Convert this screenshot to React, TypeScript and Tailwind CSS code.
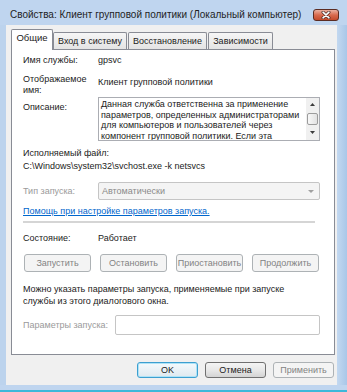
import React from "react";

function PanelButton({ label }: { label: string }) {
  return (
    <div className="w-[67px] h-[18px] shrink-0 border border-[#adb2b5] rounded-[3px] bg-[#f4f4f4] text-[#838383] flex items-center justify-center">
      {label}
    </div>
  );
}

export default function App() {
  return (
    <div className="w-[347px] h-[392px] overflow-hidden bg-[#bfd5ef] flex flex-col font-['Liberation_Sans',sans-serif] text-[9px] leading-[11px] text-[#1b1b1b]">
      {/* title bar */}
      <div className="h-[25px] shrink-0 flex items-start pl-[10px] pr-[8px]">
        <span className="mt-[9px] text-[10px] leading-[12px] text-[#1e1e1e] whitespace-nowrap">
          Свойства: Клиент групповой политики (Локальный компьютер)
        </span>
        <div className="ml-auto mt-[9px] w-[26px] h-[12px] rounded-[3px] border border-[#5b2c22] bg-linear-to-b from-[#eab0a0] via-[#d86a4e] to-[#c44a2a] flex items-center justify-center">
          <svg width="10" height="8" viewBox="0 0 10 8">
            <path d="M2 1.2 L8 6.8 M8 1.2 L2 6.8" stroke="#4a2a24" strokeWidth="3" strokeLinecap="round" />
            <path d="M2 1.2 L8 6.8 M8 1.2 L2 6.8" stroke="#ffffff" strokeWidth="1.6" strokeLinecap="round" />
          </svg>
        </div>
      </div>

      {/* middle */}
      <div className="flex h-[360px] shrink-0">
        <div className="w-[6px] shrink-0 bg-[#bcd3ed]" />
        <div className="w-[331px] shrink-0 bg-[#f0f0f0] pl-[5px] pr-[2px] pt-[4px] flex flex-col">
          {/* tabs */}
          <div className="h-[20px] flex items-end shrink-0">
            <div className="w-[42px] h-[21px] -mb-[1px] z-10 relative bg-white border border-b-0 border-[#898c95] rounded-t-[2px] flex items-start justify-center pt-[2px] leading-[12px] text-[9.5px]">
              Общие
            </div>
            <div className="w-[74px] h-[17px] bg-linear-to-b from-[#f6f6f6] to-[#e4e4e4] border border-b-0 border-[#898c95] rounded-t-[2px] flex items-center justify-center">
              Вход в систему
            </div>
            <div className="w-[79px] h-[17px] ml-[1px] bg-linear-to-b from-[#f6f6f6] to-[#e4e4e4] border border-b-0 border-[#898c95] rounded-t-[2px] flex items-center justify-center">
              Восстановление
            </div>
            <div className="w-[65px] h-[17px] ml-[1px] bg-linear-to-b from-[#f6f6f6] to-[#e4e4e4] border border-b-0 border-[#898c95] rounded-t-[2px] flex items-center justify-center">
              Зависимости
            </div>
          </div>

          {/* panel */}
          <div className="w-[324px] h-[306px] shrink-0 bg-white border border-[#898c95] pl-[11px] pt-[5px] flex flex-col">
            <div className="flex h-[11px]">
              <div className="w-[75px] shrink-0">Имя службы:</div>
              <div>gpsvc</div>
            </div>
            <div className="flex mt-[8px] h-[22px]">
              <div className="w-[75px] shrink-0">
                <div>Отображаемое</div>
                <div>имя:</div>
              </div>
              <div className="mt-[3px]">Клиент групповой политики</div>
            </div>
            <div className="flex mt-[1px]">
              <div className="w-[75px] shrink-0 mt-[5px]">Описание:</div>
              <div className="w-[222px] h-[44px] border border-[#abadb3] flex">
                <div className="flex-1 pl-[2px] pt-[1px] leading-[10.5px] overflow-hidden">
                  Данная служба ответственна за применение параметров, определенных администраторами для компьютеров и пользователей через компонент групповой политики. Если эта
                </div>
                <div className="w-[13px] shrink-0 bg-[#f0f0f0] flex flex-col items-center">
                  <div className="h-[13px] flex items-center justify-center">
                    <svg width="5" height="3" viewBox="0 0 5 3"><path d="M0 3 L2.5 0 L5 3 Z" fill="#3c3c3c" /></svg>
                  </div>
                  <div className="w-[11px] h-[12px] mt-[2px] rounded-[2px] border border-[#9c9c9c] bg-linear-to-r from-[#f8f8f8] to-[#e2e2e2]" />
                  <div className="flex-1 flex items-center justify-center">
                    <svg width="5" height="3" viewBox="0 0 5 3"><path d="M0 0 L2.5 3 L5 0 Z" fill="#3c3c3c" /></svg>
                  </div>
                </div>
              </div>
            </div>
            <div className="mt-[7px]">Исполняемый файл:</div>
            <div className="mt-[2px]">C:\Windows\system32\svchost.exe -k netsvcs</div>
            <div className="flex items-center mt-[10px]">
              <div className="w-[75px] shrink-0 text-[#9a9a9a]">Тип запуска:</div>
              <div className="w-[222px] h-[18px] border border-[#c5c5c5] rounded-[2px] bg-[#f4f4f4] flex items-center pl-[3px] pr-[5px] text-[#8a8a8a]">
                <span>Автоматически</span>
                <svg className="ml-auto" width="6" height="3" viewBox="0 0 6 3"><path d="M0 0 L3 3 L6 0 Z" fill="#a0a0a0" /></svg>
              </div>
            </div>
            <div className="mt-[6px] text-[#0066cc] underline underline-offset-[1px]">
              Помощь при настройке параметров запуска.
            </div>
            <div className="mt-[4px] w-[292px] h-[2px] bg-[#d5d5d5]" />
            <div className="flex mt-[10px]">
              <div className="w-[75px] shrink-0">Состояние:</div>
              <div>Работает</div>
            </div>
            <div className="flex gap-[9px] mt-[10px] ml-[1px]">
              <PanelButton label="Запустить" />
              <PanelButton label="Остановить" />
              <PanelButton label="Приостановить" />
              <PanelButton label="Продолжить" />
            </div>
            <div className="mt-[11px] leading-[12px]">
              <div>Можно указать параметры запуска, применяемые при запуске</div>
              <div>службы из этого диалогового окна.</div>
            </div>
            <div className="flex items-center mt-[8px]">
              <div className="w-[92px] shrink-0 text-[#9a9a9a]">Параметры запуска:</div>
              <div className="w-[205px] h-[20px] border border-[#c5c5c5] rounded-[2px] bg-white" />
            </div>
          </div>

          {/* dialog buttons */}
          <div className="flex justify-end gap-[7px] mt-[7px] pr-[1px]">
            <div className="w-[61px] h-[16px] rounded-[3px] border border-[#3c9fd0] bg-linear-to-b from-[#f4fafd] to-[#dfe9ef] flex items-center justify-center shadow-[inset_0_0_0_1px_#aee3f7]">
              OK
            </div>
            <div className="w-[61px] h-[16px] rounded-[3px] border border-[#707070] bg-linear-to-b from-[#f4f4f4] via-[#e8e8e8] to-[#d4d4d4] flex items-center justify-center">
              Отмена
            </div>
            <div className="w-[61px] h-[16px] rounded-[3px] border border-[#adb2b5] bg-[#f4f4f4] text-[#838383] flex items-center justify-center">
              Применить
            </div>
          </div>
        </div>
        <div className="w-[10px] shrink-0 bg-linear-to-r from-[#c3d8f0] to-[#a9c7e8]" />
      </div>

      {/* bottom frame */}
      <div className="flex-1 flex flex-col">
        <div className="flex-1 bg-[#bfd5ef]" />
        <div className="h-[2px] bg-[#3cb8da]" />
      </div>
    </div>
  );
}
